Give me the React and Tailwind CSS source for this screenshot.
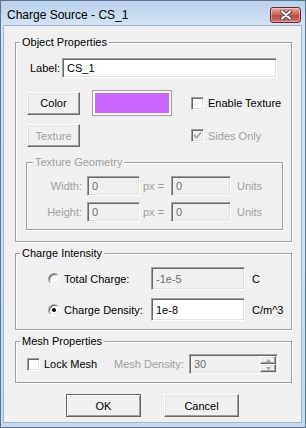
const sunken =
	'border border-t-[#a0a0a0] border-l-[#a0a0a0] border-r-white border-b-white shadow-[inset_1px_1px_0_#696969,inset_-1px_-1px_0_#e3e3e3]';
const raised =
	'border border-t-white border-l-white border-r-[#696969] border-b-[#696969] shadow-[inset_-1px_-1px_0_#a0a0a0,inset_1px_1px_0_#e3e3e3]';

const Group = ({ title, disabled, legendLeft = 'left-[4px]', className = '', children }) => (
	<div
		className={`relative border border-[#a0a0a0] shadow-[inset_1px_1px_0_#fff,1px_1px_0_#fff] ${className}`}
	>
		<span
			className={`absolute -top-[9px] ${legendLeft} bg-[#f0f0f0] px-[2px] leading-[16px] ${
				disabled ? 'text-[#a0a0a0]' : 'text-black'
			}`}
		>
			{title}
		</span>
		{children}
	</div>
);

const Check = ({ checked, disabled }) => (
	<span
		className={`w-[13px] h-[13px] shrink-0 flex items-center justify-center ${sunken} ${
			disabled ? 'bg-[#f0f0f0]' : 'bg-white'
		}`}
	>
		{checked && (
			<svg width="9" height="9" viewBox="0 0 9 9">
				<path
					d="M1 4 L3.5 6.5 L8 1.5"
					fill="none"
					stroke={disabled ? '#a0a0a0' : '#000'}
					strokeWidth="1.8"
				/>
			</svg>
		)}
	</span>
);

const Radio = ({ checked }) => (
	<span className="w-[12px] h-[12px] shrink-0 rounded-full flex items-center justify-center bg-white border border-t-[#a0a0a0] border-l-[#a0a0a0] border-r-white border-b-white shadow-[inset_1px_1px_0_#696969,inset_-1px_-1px_0_#e3e3e3]">
		{checked && <span className="w-[4px] h-[4px] rounded-full bg-black" />}
	</span>
);

const Field = ({ value, disabled, className = '' }) => (
	<div
		className={`flex items-center pl-[4px] ${sunken} ${
			disabled ? 'bg-[#f0f0f0] text-[#6d6d6d]' : 'bg-white text-black'
		} ${className}`}
	>
		{value}
	</div>
);

const Button = ({ children, disabled, className = '' }) => (
	<button
		className={`flex items-center justify-center bg-[#f0f0f0] ${raised} ${
			disabled ? 'text-[#a0a0a0]' : 'text-black'
		} ${className}`}
	>
		{children}
	</button>
);

const App = () => {
	return (
		<div className="w-[306px] h-[428px] flex flex-col border border-[#5b7595] bg-[linear-gradient(#b9d1ea,#d4e3f3_24px,#c6daee)] font-['Liberation_Sans',Arial,sans-serif] text-[11px] leading-[16px] text-black whitespace-nowrap overflow-hidden">
			<div className="h-[24px] shrink-0 flex items-center justify-between pl-[6px] pr-[4px]">
				<span className="text-[12px] leading-[18px] mt-[3px]">Charge Source - CS_1</span>
				<div className="w-[31px] h-[16px] mt-[4px] rounded-[3px] border border-[#6e2a2a] bg-[linear-gradient(#e8a89c,#d0685c_45%,#c0483c_55%,#d07a6a)] flex items-center justify-center shadow-[inset_0_0_0_1px_rgba(255,255,255,0.35)]">
					<svg width="14" height="10" viewBox="0 0 14 10">
						<path d="M3 1.5 L11 8.5 M11 1.5 L3 8.5" stroke="#4a4a4a" strokeWidth="4" strokeLinecap="round" />
						<path d="M3 1.5 L11 8.5 M11 1.5 L3 8.5" stroke="#fff" strokeWidth="2.2" strokeLinecap="round" />
					</svg>
				</div>
			</div>

			<div className="flex-1 ml-[2px] mr-[3px] mb-[4px] bg-[#f0f0f0] border border-[#9bb5d3] flex flex-col pl-[11px]">
				<Group title="Object Properties" className="mt-[16px] w-[277px] h-[200px] flex flex-col">
					<div className="mt-[15px] h-[20px] flex items-center pl-[14px]">
						<span className="w-[32px]">Label:</span>
						<Field value="CS_1" className="w-[215px] h-[20px]" />
					</div>

					<div className="mt-[12px] h-[26px] flex items-center pl-[11px]">
						<Button className="w-[53px] h-[23px]">Color</Button>
						<div className="ml-[12px] w-[80px] h-[26px] border border-[#a0a0a0] bg-white p-[2px]">
							<div className="w-full h-full bg-[#cc66ff]" />
						</div>
						<span className="ml-[19px]">
							<Check />
						</span>
						<span className="ml-[4px]">Enable Texture</span>
					</div>

					<div className="mt-[8px] h-[23px] flex items-center pl-[11px]">
						<Button disabled className="w-[53px] h-[23px]">
							Texture
						</Button>
						<span className="ml-[111px]">
							<Check checked disabled />
						</span>
						<span className="ml-[4px] text-[#a0a0a0]">Sides Only</span>
					</div>

					<Group
						title="Texture Geometry"
						disabled
						legendLeft="left-[6px]"
						className="mt-[15px] ml-[10px] w-[257px] h-[68px] flex flex-col text-[#a0a0a0]"
					>
						<div className="mt-[13px] h-[20px] flex items-center">
							<span className="w-[56px] text-right pr-[1px]">Width:</span>
							<Field value="0" disabled className="ml-[4px] w-[53px] h-[20px]" />
							<span className="w-[31px] pl-[3px]">px =</span>
							<Field value="0" disabled className="w-[60px] h-[20px]" />
							<span className="ml-[6px]">Units</span>
						</div>
						<div className="mt-[6px] h-[20px] flex items-center">
							<span className="w-[56px] text-right pr-[1px]">Height:</span>
							<Field value="0" disabled className="ml-[4px] w-[53px] h-[20px]" />
							<span className="w-[31px] pl-[3px]">px =</span>
							<Field value="0" disabled className="w-[60px] h-[20px]" />
							<span className="ml-[6px]">Units</span>
						</div>
					</Group>
				</Group>

				<Group title="Charge Intensity" className="mt-[11px] w-[277px] h-[77px] flex flex-col">
					<div className="mt-[13px] h-[23px] flex items-center pl-[32px]">
						<Radio />
						<span className="ml-[4px] w-[87px]">Total Charge:</span>
						<Field value="-1e-5" disabled className="w-[94px] h-[23px]" />
						<span className="ml-[7px]">C</span>
					</div>
					<div className="mt-[8px] h-[23px] flex items-center pl-[32px]">
						<Radio checked />
						<span className="ml-[4px] w-[87px]">Charge Density:</span>
						<Field value="1e-8" className="w-[94px] h-[23px]" />
						<span className="ml-[7px]">C/m^3</span>
					</div>
				</Group>

				<Group title="Mesh Properties" className="mt-[11px] w-[277px] h-[42px] flex flex-col">
					<div className="mt-[12px] h-[20px] flex items-center pl-[11px]">
						<Check />
						<span className="ml-[4px] w-[70px]">Lock Mesh</span>
						<span className="w-[75px] text-[#a0a0a0]">Mesh Density:</span>
						<div className={`w-[89px] h-[20px] flex items-center justify-between bg-[#f0f0f0] pl-[4px] pr-[1px] text-[#6d6d6d] ${sunken}`}>
							<span>30</span>
							<div className="flex flex-col">
								<span className={`w-[16px] h-[8px] flex items-center justify-center bg-[#f0f0f0] ${raised}`}>
									<svg width="5" height="3" viewBox="0 0 5 3">
										<path d="M0 3 L2.5 0 L5 3 Z" fill="#a0a0a0" />
									</svg>
								</span>
								<span className={`w-[16px] h-[8px] flex items-center justify-center bg-[#f0f0f0] ${raised}`}>
									<svg width="5" height="3" viewBox="0 0 5 3">
										<path d="M0 0 L2.5 3 L5 0 Z" fill="#a0a0a0" />
									</svg>
								</span>
							</div>
						</div>
					</div>
				</Group>

				<div className="mt-[11px] -ml-[11px] flex justify-center gap-[23px]">
					<button className="w-[75px] h-[23px] flex items-center justify-center bg-[#f0f0f0] border border-[#646464] shadow-[inset_1px_1px_0_#fff,inset_-1px_-1px_0_#a0a0a0]">
						OK
					</button>
					<Button className="w-[75px] h-[23px]">Cancel</Button>
				</div>
			</div>
		</div>
	);
};

export default App;
